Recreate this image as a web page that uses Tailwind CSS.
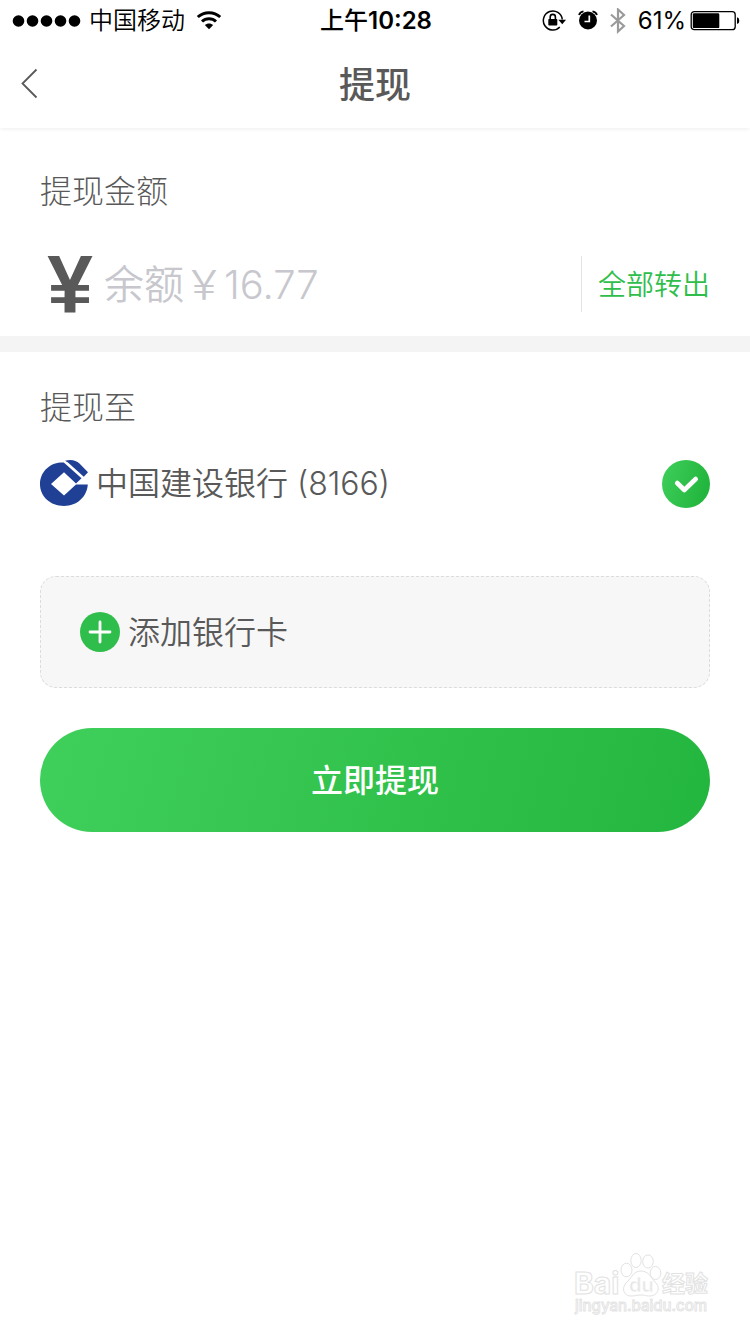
<!DOCTYPE html>
<html lang="zh-CN">
<head>
    <meta charset="UTF-8">
    <meta name="viewport" content="width=device-width, initial-scale=1.0">
    <title>提现</title>
    <script src="https://cdn.jsdelivr.net/npm/@tailwindcss/browser@4"></script>
</head>
<body class="relative min-h-screen bg-white font-['Inter','Noto_Sans_CJK_SC',sans-serif] text-[#595959]">
    <!-- Status bar -->
    <div class="grid grid-cols-3 items-center h-10 pt-0.5 pl-3 pr-2.5 text-2xl text-black">
        <div class="flex items-center gap-[7px]">
            <svg class="w-[70px] h-4" viewBox="0 0 70 16" fill="currentColor" aria-hidden="true">
                <circle cx="6.500" cy="8" r="5.800"/>
                <circle cx="20.500" cy="8" r="5.800"/>
                <circle cx="34.500" cy="8" r="5.800"/>
                <circle cx="48.500" cy="8" r="5.800"/>
                <circle cx="62.500" cy="8" r="5.800"/>
            </svg>
            <span class="font-[350] whitespace-nowrap">中国移动</span>
            <svg class="w-[26px] h-5 ml-1" viewBox="0 0 26 20" fill="none" stroke="currentColor" stroke-width="3" aria-hidden="true">
                <path d="M1.800 6C8 .3 18 .3 24.200 6"/>
                <path d="M6 10.500C10 6.800 16 6.800 20 10.500"/>
                <path d="M13 18.300L8.800 14.100C11.200 12 14.800 12 17.200 14.100Z" fill="currentColor" stroke="none"/>
            </svg>
        </div>
        <p class="text-center font-medium whitespace-nowrap">上午<span class="font-semibold">10:28</span></p>
        <div class="flex items-center justify-end">
            <svg class="w-6 h-6 mr-3" viewBox="0 0 24 24" fill="none" stroke="currentColor" stroke-width="1.500" aria-hidden="true">
                <path d="M17.800 18A9.500 9.500 0 1 1 20.300 10.500"/>
                <path d="M16.300 10.800H24L20.300 15.300Z" fill="currentColor" stroke="none"/>
                <rect x="6.300" y="10" width="9" height="6.500" rx=".8" fill="currentColor" stroke="none"/>
                <path d="M8.200 10.500V8a2.600 2.600 0 0 1 5.200 0V10.500" stroke-width="1.600"/>
            </svg>
            <svg class="w-5 h-6 mr-3" viewBox="0 0 20 24" fill="none" stroke="currentColor" aria-hidden="true">
                <circle cx="10" cy="11.500" r="9" fill="currentColor" stroke="none"/>
                <path d="M1 6Q2.200 2.800 5.500 2.300M19 6Q17.800 2.800 14.500 2.300" stroke-width="1.800"/>
                <path d="M11.300 6.500V12.500H6.500" stroke="white" stroke-width="1.700"/>
            </svg>
            <svg class="w-4 h-[26px] mr-3 text-[#9a9a9a]" viewBox="0 0 16 26" fill="none" stroke="currentColor" stroke-width="2.200" aria-hidden="true">
                <path d="M1 6.500L14 18L8 23.500V1.500L14 7L1 18.500"/>
            </svg>
            <span class="mr-1">61%</span>
            <svg class="w-[50px] h-5" viewBox="0 0 50 20" fill="none" aria-hidden="true">
                <rect x="1.200" y=".7" width="44" height="18" rx="3" stroke="currentColor" stroke-width="1.300"/>
                <rect x="2.800" y="2.300" width="26.500" height="14.800" rx="1.200" fill="currentColor"/>
                <path d="M47 6.300Q49.300 6.800 49.300 9.700T47 13.100Z" fill="currentColor"/>
            </svg>
        </div>
    </div>

    <!-- Title bar -->
    <header class="grid grid-cols-[1fr_auto_1fr] items-center h-22 px-4 shadow-[0_3px_3px_-1px_rgba(0,0,0,0.05)]">
        <button type="button" aria-label="返回" class="w-8 h-12">
            <svg class="w-7 h-8" viewBox="0 0 28 32" fill="none" stroke="currentColor" stroke-width="1.800">
                <path d="M20.500 1.500L6.500 15.500L20.500 29.500"/>
            </svg>
        </button>
        <h1 class="pt-0.5 text-4xl font-medium">提现</h1>
    </header>

    <main>
        <!-- Amount -->
        <section class="px-10 pt-10 pb-6 border-b-16 border-[#f4f4f4]">
            <label for="amount" class="block text-[32px] leading-12 font-light">提现金额</label>
            <div class="flex items-center h-14 mt-10">
                <span class="w-15 mr-1 text-center font-['Liberation_Sans',sans-serif] text-[82px] leading-14 font-bold">¥</span>
                <input id="amount" type="text" inputmode="decimal" placeholder="余额￥16.77" class="flex-1 min-w-0 h-14 pt-0.5 text-[40px] font-[350] outline-none placeholder:text-[#c7c7cd]">
                <button type="button" class="h-14 pt-0.5 pl-4 border-l border-[#e4e4e4] text-[28px] font-[350] text-[#2fbe4b]">全部转出</button>
            </div>
        </section>

        <!-- Destination card -->
        <section class="px-10 pt-8">
            <h2 class="text-[32px] leading-12 font-light">提现至</h2>
            <label class="flex items-center h-12 mt-7 text-[32px] font-[350]">
                <input type="radio" name="card" checked class="peer sr-only">
                <svg class="w-12 h-12 mr-2" viewBox="0 0 48 48" aria-hidden="true">
                    <path d="M20.500 2.600H23.800L41.500 18.300L36 23.600L24 12.300L11 24L24 35.500L36 24.600H47.800C47 37 37 46 24 46C10.500 46 0 36.500 0 24.300C0 12.500 9 3.500 20.500 2.600Z" fill="#1f4094"/>
                    <path d="M25 .8C31-.8 36 .3 39.500 3.500L48 12.300L43.800 16.700L28 2.500Z" fill="#1f4094"/>
                </svg>
                <span class="flex-1">中国建设银行 (8166)</span>
                <svg class="hidden w-12 h-12 peer-checked:block" viewBox="0 0 48 48" fill="none" aria-hidden="true">
                    <defs>
                        <linearGradient id="check" x1="0" y1="0" x2="1" y2=".3">
                            <stop offset="0" stop-color="#3fcf5b"/>
                            <stop offset="1" stop-color="#23b63e"/>
                        </linearGradient>
                    </defs>
                    <circle cx="24" cy="24" r="24" fill="url(#check)"/>
                    <path d="M15.200 23L22.300 30L33.700 19" stroke="white" stroke-width="4.600" stroke-linecap="round" stroke-linejoin="round"/>
                </svg>
            </label>

            <button type="button" class="flex items-center w-full h-28 mt-[68px] px-[39px] border border-dashed border-[#dcdcdc] rounded-2xl bg-[#f7f7f7] text-[32px] font-[350]">
                <svg class="w-10 h-10 mr-2" viewBox="0 0 40 40" aria-hidden="true">
                    <circle cx="20" cy="20" r="20" fill="#2fbe4b"/>
                    <path d="M20 10V30M10 20H30" stroke="white" stroke-width="2.800" stroke-linecap="round"/>
                </svg>
                <span class="pt-0.5">添加银行卡</span>
            </button>

            <button type="submit" class="w-full h-26 mt-10 pt-0.5 rounded-full bg-linear-105 from-[#3fcf5b] to-[#23b63e] text-[32px] font-medium text-white">立即提现</button>
        </section>
    </main>

    <!-- Watermark -->
    <div class="absolute right-10 bottom-4" aria-hidden="true">
        <svg class="w-[136px] h-[68px]" viewBox="0 0 136 68" fill="white" stroke="#e2e2e2" stroke-width="1">
            <ellipse cx="52.500" cy="20" rx="5.500" ry="6.800"/>
            <ellipse cx="62" cy="10.500" rx="5.200" ry="7"/>
            <ellipse cx="74" cy="11.500" rx="5.300" ry="6.600"/>
            <ellipse cx="81.500" cy="23" rx="5.300" ry="6.500"/>
            <path d="M67 21C75 21 77 28 82 33C87 39 83 46 76 46C71 46 72 45 67 45C62 45 62 46 57 46C50 46 47 39 52 33C58 28 59 21 67 21Z"/>
            <text x="0" y="44" font-size="30" font-weight="700">Bai</text>
            <text x="55" y="42" font-size="20" font-weight="600" fill="#e6e6e6" stroke="white" stroke-width=".5">du</text>
            <text x="88" y="42" font-size="23" font-weight="700">经验</text>
            <text x="1" y="61" font-size="15" font-weight="500" fill="#f8f8f8" stroke-width=".8">jingyan.baidu.com</text>
        </svg>
    </div>
</body>
</html>
